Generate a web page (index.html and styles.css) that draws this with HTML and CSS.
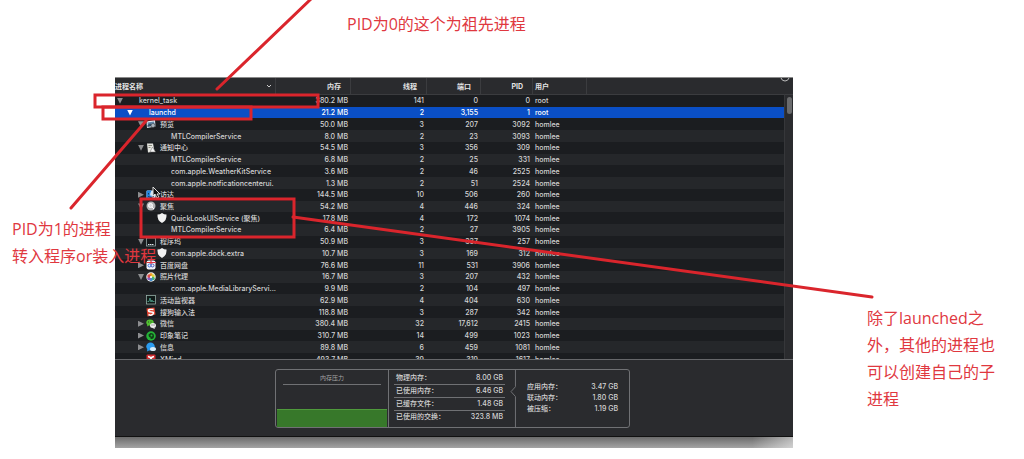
FILE: index.html
```html
<!DOCTYPE html>
<html lang="zh-CN">
<head>
    <meta charset="UTF-8">
    <meta name="viewport" content="width=device-width, initial-scale=1.0">
    <title>活动监视器</title>
    <link rel="stylesheet" href="styles.css">
</head>
<body>
    <!-- app icons -->
    <svg class="sprite" width="0" height="0">
        <symbol id="preview" viewBox="0 0 20 20"><path fill="#dfe6ec" d="M1 5l17-3 1 13-17 3z"/><path fill="#5f86a8" d="M3 7l13-2 1 5-13 3z"/><path fill="#35506b" d="M3 12l5-3 4 2 5-2v4L3 16z"/><circle cx="14" cy="13" r="4" fill="#aab6c0" stroke="#333" stroke-width="1"/></symbol>
        <symbol id="notify" viewBox="0 0 20 20"><path fill="#e6e6e0" d="M2 1h12l3 16-13 2z"/><path fill="#8c8c80" d="M5 4h7v2H5zM5 8h4v2H5z"/><path fill="#f6f6f6" stroke="#666" d="M13 8l6 10H8z"/></symbol>
        <symbol id="finder" viewBox="0 0 20 20"><rect x="1" y="1" width="18" height="18" rx="2" fill="#d5e6f5"/><path fill="#2587e0" d="M1 3q0-2 2-2h8q-3 5-3 10h3l1 8H3q-2 0-2-2z"/><path fill="none" stroke="#123" stroke-width="1.5" d="M5 6v3M15 6v3M4 13q6 4 12 0"/></symbol>
        <symbol id="spotlight" viewBox="0 0 20 20"><circle cx="10" cy="10" r="9" fill="#b5b5b5"/><circle cx="9" cy="9" r="4" fill="#ddd" stroke="#fff" stroke-width="2"/><path stroke="#fff" stroke-width="2" d="M12 12l4 4"/></symbol>
        <symbol id="shield" viewBox="0 0 20 20"><path fill="#f2f2f2" d="M10 0q4 3 9 3 1 12-9 17Q0 15 1 3q5 0 9-3z"/></symbol>
        <symbol id="dock" viewBox="0 0 20 20"><rect x="1" y="2" width="18" height="16" fill="#15181a" stroke="#9aa" stroke-width="1.5"/><path stroke="#d8e4e8" stroke-width="2" stroke-dasharray="3 1" d="M4 15h12"/></symbol>
        <symbol id="baidu" viewBox="0 0 20 20"><rect x="1" y="1" width="18" height="18" rx="4" fill="#f2f4fa"/><circle cx="7" cy="11" r="3" fill="none" stroke="#3b6ee0" stroke-width="2"/><circle cx="13" cy="11" r="3" fill="none" stroke="#4759b5" stroke-width="2"/><circle cx="10" cy="6" r="2" fill="#e0495a"/></symbol>
        <symbol id="photos" viewBox="0 0 20 20"><circle cx="10" cy="10" r="9.5" fill="#eee"/><circle cx="10" cy="5.500" r="3.500" fill="#f39b26"/><circle cx="14" cy="8" r="3.500" fill="#d8d23a"/><circle cx="14" cy="13" r="3.500" fill="#45b36b"/><circle cx="10" cy="15" r="3.500" fill="#3f8fd0"/><circle cx="6" cy="13" r="3.500" fill="#8a5fc0"/><circle cx="6" cy="8" r="3.500" fill="#dd4b4b"/><circle cx="10" cy="10" r="2" fill="#fff"/></symbol>
        <symbol id="monitor" viewBox="0 0 20 20"><rect x="1" y="1" width="18" height="17" fill="#101a18" stroke="#9bb5ad" stroke-width="1.5"/><path fill="none" stroke="#58b09a" stroke-width="1.500" d="M3 13h3l2-7 2 8 2-4 1 3h4"/></symbol>
        <symbol id="sogou" viewBox="0 0 20 20"><path fill="#e2432f" d="M1 3l16-2 2 14-16 4z"/><path fill="none" stroke="#fff" stroke-width="3" d="M15 5Q5 4 5 7t6 3 3 4-9 1"/></symbol>
        <symbol id="wechat" viewBox="0 0 20 20"><ellipse cx="8" cy="7" rx="7.500" ry="6" fill="#53c232"/><path fill="#53c232" d="M3 10l-1 5 5-3z"/><ellipse cx="14" cy="13" rx="6" ry="5" fill="#eee"/><path fill="#eee" d="M16 16l2 4-5-2z"/><path stroke="#222" stroke-width="1.500" d="M5 5v2M10 5v2M12 11v2M16 11v2"/></symbol>
        <symbol id="evernote" viewBox="0 0 20 20"><circle cx="10" cy="10" r="9.500" fill="#25b437"/><path fill="#123d18" d="M5 7l4-3q7 0 7 6 0 6-5 6-3 0-2-3-4 0-4-6z"/><circle cx="11" cy="9" r="2" fill="#25b437"/></symbol>
        <symbol id="messages" viewBox="0 0 20 20"><ellipse cx="9" cy="9" rx="8.500" ry="8" fill="#2b9cf0"/><path fill="#2b9cf0" d="M3 13l-1 6 6-3z"/><ellipse cx="14" cy="14" rx="6" ry="4" fill="#d8ecf8"/></symbol>
        <symbol id="xmind" viewBox="0 0 20 20"><rect x="1" y="1" width="18" height="18" rx="2" fill="#cf2a2f"/><path fill="none" stroke="#fff" stroke-width="3" d="M4 5q6 1 6 5t6 5M16 5q-6 1-6 5t-6 5"/></symbol>
    </svg>

    <main class="window">
        <div class="process-area">
            <table class="processes">
                <colgroup>
                    <col class="c-name"><col class="c-mem"><col class="c-thread"><col class="c-port"><col class="c-pid"><col class="c-user"><col>
                </colgroup>
                <thead>
                    <tr>
                        <th><div class="sorted">进程名称<svg width="6" height="4" viewBox="0 0 6 4"><path fill="none" stroke="#ccc" d="M1 1l2 2 2-2"/></svg></div></th>
                        <th>内存</th><th>线程</th><th>端口</th><th>PID</th><th>用户</th><th></th>
                    </tr>
                </thead>
                <tbody>
                    <tr><td><div class="name"><button class="arrow open" aria-label="折叠"></button><i></i>kernel_task</div></td><td>380.2 MB</td><td>141</td><td>0</td><td>0</td><td>root</td><td></td></tr>
                    <tr class="selected"><td><div class="name l1"><button class="arrow open" aria-label="折叠"></button><i></i>launchd</div></td><td>21.2 MB</td><td>2</td><td>3,155</td><td>1</td><td>root</td><td></td></tr>
                    <tr><td><div class="name l2"><button class="arrow open" aria-label="折叠"></button><svg><use href="#preview"/></svg>预览</div></td><td>50.0 MB</td><td>3</td><td>207</td><td>3092</td><td>homlee</td><td></td></tr>
                    <tr><td><div class="name l3"><b></b><i></i>MTLCompilerService</div></td><td>8.0 MB</td><td>2</td><td>23</td><td>3093</td><td>homlee</td><td></td></tr>
                    <tr><td><div class="name l2"><button class="arrow open" aria-label="折叠"></button><svg><use href="#notify"/></svg>通知中心</div></td><td>54.5 MB</td><td>3</td><td>356</td><td>309</td><td>homlee</td><td></td></tr>
                    <tr><td><div class="name l3"><b></b><i></i>MTLCompilerService</div></td><td>6.8 MB</td><td>2</td><td>25</td><td>331</td><td>homlee</td><td></td></tr>
                    <tr><td><div class="name l3"><b></b><i></i>com.apple.WeatherKitService</div></td><td>3.6 MB</td><td>2</td><td>46</td><td>2525</td><td>homlee</td><td></td></tr>
                    <tr><td><div class="name l3"><b></b><i></i>com.apple.notficationcenterui.</div></td><td>1.3 MB</td><td>2</td><td>51</td><td>2524</td><td>homlee</td><td></td></tr>
                    <tr><td><div class="name l2"><button class="arrow" aria-label="展开"></button><svg><use href="#finder"/></svg>访达</div></td><td>144.5 MB</td><td>10</td><td>506</td><td>260</td><td>homlee</td><td></td></tr>
                    <tr><td><div class="name l2"><button class="arrow open" aria-label="折叠"></button><svg><use href="#spotlight"/></svg>聚焦</div></td><td>54.2 MB</td><td>4</td><td>446</td><td>324</td><td>homlee</td><td></td></tr>
                    <tr><td><div class="name l3"><b></b><svg><use href="#shield"/></svg>QuickLookUIService (聚焦)</div></td><td>17.8 MB</td><td>4</td><td>172</td><td>1074</td><td>homlee</td><td></td></tr>
                    <tr><td><div class="name l3"><b></b><i></i>MTLCompilerService</div></td><td>6.4 MB</td><td>2</td><td>27</td><td>3905</td><td>homlee</td><td></td></tr>
                    <tr><td><div class="name l2"><button class="arrow open" aria-label="折叠"></button><svg><use href="#dock"/></svg>程序坞</div></td><td>50.9 MB</td><td>3</td><td>337</td><td>257</td><td>homlee</td><td></td></tr>
                    <tr><td><div class="name l3"><b></b><svg><use href="#shield"/></svg>com.apple.dock.extra</div></td><td>10.7 MB</td><td>3</td><td>169</td><td>312</td><td>homlee</td><td></td></tr>
                    <tr><td><div class="name l2"><button class="arrow" aria-label="展开"></button><svg><use href="#baidu"/></svg>百度网盘</div></td><td>76.6 MB</td><td>11</td><td>531</td><td>3906</td><td>homlee</td><td></td></tr>
                    <tr><td><div class="name l2"><button class="arrow open" aria-label="折叠"></button><svg><use href="#photos"/></svg>照片代理</div></td><td>16.7 MB</td><td>3</td><td>207</td><td>432</td><td>homlee</td><td></td></tr>
                    <tr><td><div class="name l3"><b></b><i></i>com.apple.MediaLibraryServi...</div></td><td>9.9 MB</td><td>2</td><td>104</td><td>497</td><td>homlee</td><td></td></tr>
                    <tr><td><div class="name l2"><b></b><svg><use href="#monitor"/></svg>活动监视器</div></td><td>62.9 MB</td><td>4</td><td>404</td><td>630</td><td>homlee</td><td></td></tr>
                    <tr><td><div class="name l2"><b></b><svg><use href="#sogou"/></svg>搜狗输入法</div></td><td>118.8 MB</td><td>3</td><td>287</td><td>342</td><td>homlee</td><td></td></tr>
                    <tr><td><div class="name l2"><button class="arrow" aria-label="展开"></button><svg><use href="#wechat"/></svg>微信</div></td><td>380.4 MB</td><td>32</td><td>17,612</td><td>2415</td><td>homlee</td><td></td></tr>
                    <tr><td><div class="name l2"><button class="arrow" aria-label="展开"></button><svg><use href="#evernote"/></svg>印象笔记</div></td><td>310.7 MB</td><td>14</td><td>499</td><td>1023</td><td>homlee</td><td></td></tr>
                    <tr><td><div class="name l2"><button class="arrow" aria-label="展开"></button><svg><use href="#messages"/></svg>信息</div></td><td>89.8 MB</td><td>6</td><td>459</td><td>1081</td><td>homlee</td><td></td></tr>
                    <tr><td><div class="name l2"><b></b><svg><use href="#xmind"/></svg>XMind</div></td><td>493.7 MB</td><td>39</td><td>319</td><td>1617</td><td>homlee</td><td></td></tr>
                </tbody>
            </table>
            <div class="side">
                <svg class="side-top" viewBox="0 0 13 16"><path fill="none" stroke="#bbb" d="M1 0q1 3 4 3t4-3"/></svg>
                <div class="track"><div class="thumb"></div></div>
            </div>
        </div>

        <footer class="summary">
            <div class="panel">
                <section class="pressure">
                    <h2>内存压力</h2>
                    <div class="graph"></div>
                </section>
                <dl class="usage">
                    <div><dt>物理内存：</dt><dd>8.00 GB</dd></div>
                    <div><dt>已使用内存：</dt><dd>6.46 GB</dd></div>
                    <div><dt>已缓存文件：</dt><dd>1.48 GB</dd></div>
                    <div><dt>已使用的交换：</dt><dd>323.8 MB</dd></div>
                </dl>
                <svg class="divider" viewBox="0 0 6 58"><path fill="none" stroke="#707174" d="M5.500 0v17L1 22l4.500 5v31"/></svg>
                <dl class="detail">
                    <div><dt>应用内存：</dt><dd>3.47 GB</dd></div>
                    <div><dt>联动内存：</dt><dd>1.80 GB</dd></div>
                    <div><dt>被压缩：</dt><dd>1.19 GB</dd></div>
                </dl>
            </div>
        </footer>
    </main>
    <div class="shadow"></div>

    <!-- red marks drawn over the window -->
    <svg class="marks">
        <path class="cursor" d="M153 187v9l2-2 2 4 2-1-2-3h3z"/>
        <path class="pen" d="M217 89L311 -1M146 121L71 208M293 217L872 297"/>
        <rect class="pen" x="95" y="95" width="223" height="12"/>
        <rect class="pen" x="103" y="107" width="148" height="12"/>
        <rect class="pen" x="141" y="199" width="153" height="38"/>
    </svg>
    <p class="note note-root">PID为0的这个为祖先进程</p>
    <p class="note note-launchd">PID为1的进程<br>转入程序or装入进程</p>
    <p class="note note-child">除了launched之<br>外，其他的进程也<br>可以创建自己的子<br>进程</p>
</body>
</html>
```
FILE: styles.css
```css
* {
    box-sizing: border-box;
}
body {
    position: relative;
    margin: 0;
    padding: 77px 231px 12px 115px;
    background-color: #fff;
    font-family: Inter, "Noto Sans CJK SC", sans-serif;
    overflow: hidden;
}
.sprite {
    position: absolute;
}
.window {
    background-color: #2a2b2e;
    border-top: 1px solid #8a8a8a;
    border-bottom: 1px solid #111;
    color: #d4d4d4;
    font-size: 7px;
    line-height: 11px;
}

/* process list */
.process-area {
    display: grid;
    grid-template-columns: 1fr 9px;
    height: 281px;
    overflow: hidden;
}
.processes {
    width: 100%;
    height: 287px;
    table-layout: fixed;
    border-collapse: separate;
    border-spacing: 0;
    font-weight: 500;
}
.c-name { width: 161px; }
.c-mem { width: 75px; }
.c-thread { width: 76px; }
.c-port { width: 54px; }
.c-pid { width: 52px; }
.c-user { width: 54px; }
.processes th {
    height: 17px;
    padding: 0 9px 0 0;
    border-right: 1px solid #3b3c3f;
    border-bottom: 1px solid #3b3c3f;
    text-align: right;
    font-weight: 700;
    color: #e4e4e4;
}
.processes th:last-child {
    border-right: none;
}
.processes th:first-child {
    padding-right: 3px;
}
.processes th:nth-child(6) {
    padding-left: 2px;
    text-align: left;
}
.sorted {
    display: flex;
    align-items: center;
    justify-content: space-between;
}
.processes td {
    padding: 0 3px 0 0;
    text-align: right;
    white-space: nowrap;
}
.processes td:nth-child(6) {
    padding: 0 0 0 2px;
    text-align: left;
}
.processes tbody tr {
    background-color: #1b1d20;
}
.processes tbody tr:nth-child(even) {
    background-color: #25272a;
}
.processes tbody tr.selected {
    background-color: #0a4fc6;
    color: #fff;
}
.name {
    display: flex;
    align-items: center;
    height: 11px;
    padding-left: 2px;
}
.l1 { padding-left: 12px; }
.l2 { padding-left: 23px; }
.l3 { padding-left: 34px; }
.name b {
    flex: none;
    width: 8px;
}
.name i {
    flex: none;
    width: 14px;
}
.name svg {
    flex: none;
    width: 10px;
    height: 10px;
    margin-right: 4px;
}
.arrow {
    flex: none;
    width: 6px;
    height: 6px;
    margin: 0 2px 0 0;
    padding: 0;
    border: none;
    background-color: #8d8e90;
    clip-path: polygon(0 0, 100% 50%, 0 100%);
}
.arrow.open {
    clip-path: polygon(0 0, 100% 0, 50% 100%);
}
.selected .arrow {
    background-color: #fff;
}
.side {
    display: flex;
    flex-direction: column;
}
.side-top {
    width: 13px;
    height: 16px;
    margin-left: -4px;
}
.track {
    flex: 1;
    padding: 2px 1px;
    border-top: 1px solid #3b3c3f;
    border-left: 1px solid #36373a;
}
.thumb {
    width: 5px;
    height: 17px;
    margin-left: 1px;
    border-radius: 3px;
    background-color: #6a6b6d;
}

/* memory summary */
.summary {
    display: flex;
    justify-content: center;
    padding: 9px 3px 8px 0;
    border-top: 1px solid #66676a;
}
.panel {
    display: flex;
    width: 355px;
    height: 59px;
    border: 1px solid #707174;
    border-radius: 3px;
}
.pressure {
    display: flex;
    flex-direction: column;
    justify-content: space-between;
    width: 113px;
    border-right: 1px solid #707174;
}
.pressure h2 {
    margin: 2px 7px 0;
    padding-bottom: 1px;
    border-bottom: 1px solid #707174;
    text-align: center;
    font-size: 6px;
    font-weight: 400;
    color: #a5a5a5;
}
.graph {
    height: 18px;
    margin: 0 1px;
    border-top: 1px solid #4f9a3c;
    background-color: #37782a;
}
.usage,
.detail {
    margin: 0;
    font-weight: 500;
}
.usage {
    width: 121px;
    padding: 2px 5px 0;
}
.usage div,
.detail div {
    display: flex;
    justify-content: space-between;
}
.usage div {
    height: 13px;
    padding: 0 2px;
    border-bottom: 1px solid #707174;
}
.usage div:last-child {
    border-bottom: none;
}
.usage dd,
.detail dd {
    margin: 0;
}
.divider {
    width: 6px;
    height: 57px;
}
.detail {
    flex: 1;
    padding: 11px 11px 0;
}
.detail div {
    height: 11px;
}
.shadow {
    height: 11px;
    background: linear-gradient(90deg, transparent 94%, rgba(255, 255, 255, 0.5)), linear-gradient(#6c6c6c, #a4a4a4);
}

/* annotations */
.marks {
    position: absolute;
    top: 0;
    left: 0;
    width: 100%;
    height: 100%;
    pointer-events: none;
}
.pen {
    fill: none;
    stroke: #da252c;
    stroke-width: 3;
    stroke-linecap: round;
}
.cursor {
    fill: #111;
    stroke: #ddd;
    stroke-width: 1;
}
.note {
    position: absolute;
    margin: 0;
    font-family: "Open Sans", "Noto Sans CJK SC", sans-serif;
    font-size: 16px;
    line-height: 27px;
    color: #e0383f;
    white-space: nowrap;
}
.note-root {
    top: 11px;
    left: 347px;
}
.note-launchd {
    top: 216px;
    left: 12px;
}
.note-child {
    top: 305px;
    left: 867px;
}
```
